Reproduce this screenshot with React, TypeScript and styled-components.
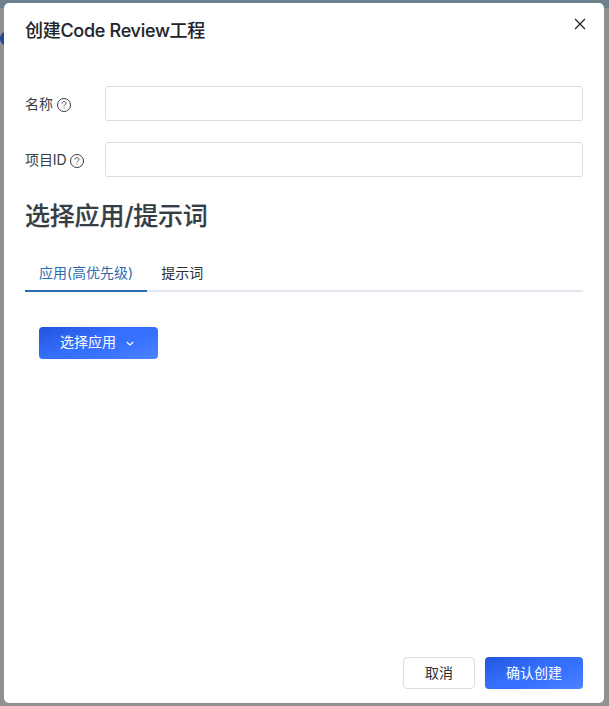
import React from 'react';
import styled, { createGlobalStyle, css } from 'styled-components';

const GlobalStyle = createGlobalStyle`
  * { box-sizing: border-box; }
  body {
    margin: 0;
    overflow: hidden;
    font-family: Inter, "Noto Sans CJK SC", sans-serif;
    font-size: 14px;
    color: #2b2f33;
  }
`;

const Backdrop = styled.div`
  position: relative;
  height: 706px;
  padding: 3px 5px 3px 4px;
  background: linear-gradient(#6c808d 0 8px, #91908f 8px);
`;

const PageDot = styled.span`
  position: absolute;
  left: 0;
  top: 31px;
  width: 15px;
  height: 15px;
  border-radius: 50%;
  background: #24459b;
`;

const Dialog = styled.section`
  position: relative;
  display: flex;
  flex-direction: column;
  height: 700px;
  padding: 0 21px 14px;
  border-radius: 5px;
  background: #fff;
`;

const Header = styled.header`
  display: flex;
  justify-content: space-between;
  height: 83px;
  padding-top: 14px;
`;

const Title = styled.h1`
  margin: 0;
  font-size: 18px;
  line-height: 27px;
  font-weight: 500;
  letter-spacing: -0.29px;
  -webkit-text-stroke: 0.1px currentColor;
  color: #212529;
  white-space: nowrap;
`;

const CloseButton = styled.button`
  width: 12px;
  height: 12px;
  margin: 1px -3px 0 0;
  padding: 0;
  border: 0;
  background: none;
  svg { display: block; }
`;

const Field = styled.div`
  display: flex;
  align-items: center;
  height: 35px;
  margin-bottom: 21px;
`;

const Label = styled.label`
  display: flex;
  align-items: center;
  gap: 4px;
  width: 80px;
  line-height: 20px;
  letter-spacing: -0.1px;
  color: #3a3e42;
  svg { margin-top: 2px; }
`;

const Input = styled.input`
  flex: 1;
  height: 35px;
  padding: 0 10px;
  border: 1px solid #dedede;
  border-radius: 3px;
  outline: none;
  font: inherit;
`;

const Heading = styled.h2`
  margin: 0;
  font-size: 25px;
  line-height: 36px;
  font-weight: 500;
  letter-spacing: -0.2px;
  -webkit-text-stroke: 0.2px currentColor;
  color: #363e45;
`;

const TabBar = styled.div`
  display: flex;
  height: 38px;
  margin-top: 20px;
  border-bottom: 2px solid #e0e7f1;
`;

const Tab = styled.button<{ $active?: boolean }>`
  height: 38px;
  padding: 2px 14px 0;
  border: 0;
  border-bottom: 2px solid ${p => (p.$active ? '#2b6cb0' : 'transparent')};
  background: none;
  font: inherit;
  line-height: 34px;
  color: ${p => (p.$active ? '#2b6cb0' : '#2b2f33')};
  white-space: nowrap;
`;

const TabPanel = styled.div`
  flex: 1;
  padding: 35px 14px;
`;

const Button = styled.button<{ $primary?: boolean; $width: number }>`
  display: inline-flex;
  align-items: center;
  justify-content: center;
  gap: 9px;
  width: ${p => p.$width}px;
  height: 32px;
  padding: 0 0 3px;
  border-radius: 4px;
  border: 1px solid #dcdddf;
  background: #fff;
  font: inherit;
  color: #2b2f33;
  ${p => p.$primary && css`
    border: 0;
    background: linear-gradient(160deg, #2354dc 0%, #346ffd 45%, #3772ff 65%, #4e82ff 100%);
    color: #fff;
  `}
`;

const DropdownButton = styled(Button)`
  padding: 0 2px 4px 0;
  svg { margin-top: 3px; }
`;

const Footer = styled.footer`
  display: flex;
  justify-content: flex-end;
  gap: 10px;
`;

const HelpIcon = () => (
  <svg width="14" height="14" viewBox="0 0 14 14" fill="none" stroke="currentColor">
    <circle cx="7" cy="7" r="6.5" />
    <path d="M5 5.6C5 4.4 5.8 3.7 7 3.7s2 .7 2 1.7c0 1.4-2 1.5-2 3" strokeWidth="0.9" />
    <circle cx="7" cy="10" r="0.55" fill="currentColor" stroke="none" />
  </svg>
);

export default function App() {
  return (
    <>
      <GlobalStyle />
      <Backdrop>
        <PageDot />
        <Dialog role="dialog">
          <Header>
            <Title>创建Code Review工程</Title>
            <CloseButton aria-label="关闭">
              <svg width="12" height="12" viewBox="0 0 12 12" fill="none" stroke="#212529" strokeWidth="1.3">
                <path d="M1 1l10 10M11 1L1 11" />
              </svg>
            </CloseButton>
          </Header>
          <Field>
            <Label htmlFor="name">名称<HelpIcon /></Label>
            <Input id="name" />
          </Field>
          <Field>
            <Label htmlFor="project">项目ID<HelpIcon /></Label>
            <Input id="project" />
          </Field>
          <Heading>选择应用/提示词</Heading>
          <TabBar>
            <Tab $active>应用(高优先级)</Tab>
            <Tab>提示词</Tab>
          </TabBar>
          <TabPanel>
            <DropdownButton $primary $width={119}>
              选择应用
              <svg width="10" height="10" viewBox="0 0 10 10" fill="none" stroke="currentColor" strokeWidth="1.2">
                <path d="M1.7 4L5 7l3.3-3" />
              </svg>
            </DropdownButton>
          </TabPanel>
          <Footer>
            <Button $width={72}>取消</Button>
            <Button $primary $width={98}>确认创建</Button>
          </Footer>
        </Dialog>
      </Backdrop>
    </>
  );
}
